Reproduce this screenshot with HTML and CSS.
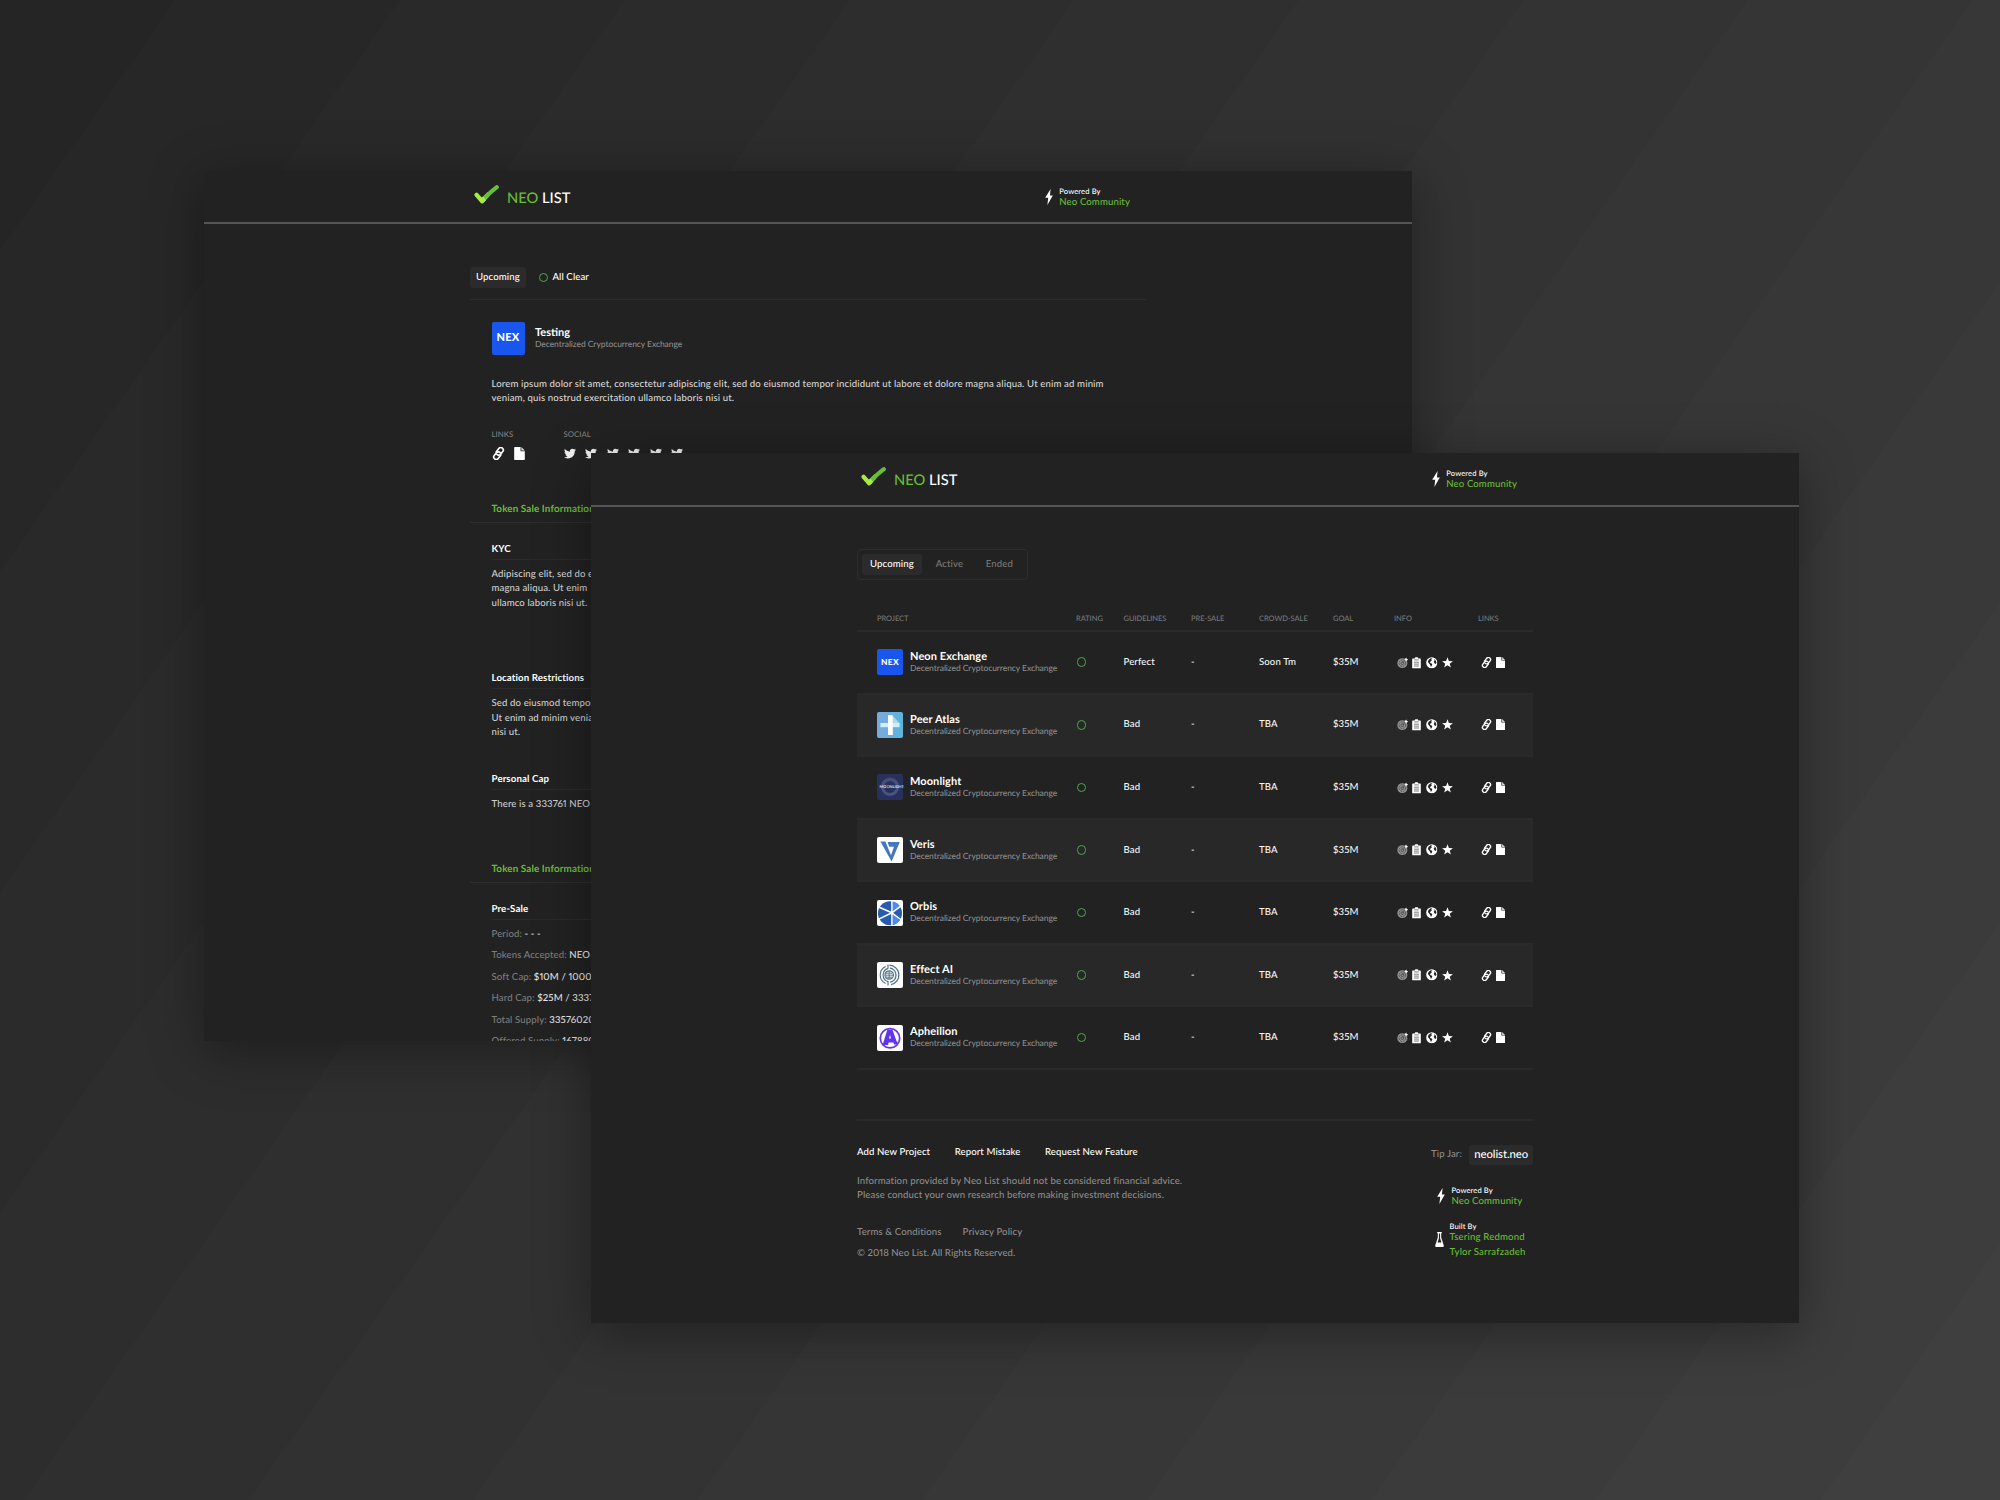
FILE: index.html
```html
<!DOCTYPE html>
<html lang="en">
<head>
<meta charset="utf-8">
<title>Neo List</title>
<link rel="stylesheet" href="styles.css">
</head>
<body>
<svg class="sprite" aria-hidden="true">
  <symbol id="check" viewBox="0 0 25 19">
    <path d="M2.6 9.9 8.2 16.2 14 9.6" fill="none" stroke="#a9ea46" stroke-width="4.3" stroke-linecap="round" stroke-linejoin="round"/>
    <path d="M10.4 12.8C14 9.8 17.4 6.4 22.8 2.2" fill="none" stroke="#68be35" stroke-width="4.2" stroke-linecap="round"/>
    <path d="M7.6 12.6 9.8 11.8 11.8 15.4 8.5 18.2 6 16.4Z" fill="#a9ea46"/>
  </symbol>
  <symbol id="bolt" viewBox="0 0 8 16"><path d="M5.6 0 0.2 8.8H3.2L2.4 16 7.8 6.6H4.9Z" fill="#fff"/></symbol>
  <symbol id="flask" viewBox="0 0 9 15"><path d="M2.2 0H6.8V1.2H6.2V5.6L8.8 13.4Q9 15 7.6 15H1.4Q0 15 .2 13.4L2.8 5.6V1.2H2.2Z" fill="#fff"/><path d="M3.9 1.4H5.1V6.2L6.4 10.4H2.6L3.9 6.2Z" fill="#222"/></symbol>
  <symbol id="link" viewBox="0 0 12 12"><g fill="none" stroke="#fff" stroke-width="1.5" stroke-linecap="round" transform="rotate(-52 6 6)"><path d="M6.2 8.6H2.2A2.3 2.3 0 0 1 2.2 4H5.4A2.3 2.3 0 0 1 7.5 6.8"/><path d="M5.8 3.4H9.8A2.3 2.3 0 0 1 9.8 8H6.6A2.3 2.3 0 0 1 4.5 5.2"/></g></symbol>
  <symbol id="file" viewBox="0 0 9 11"><path d="M.6 0H5.4V3.6H9V10.4Q9 11 8.4 11H.6Q0 11 0 10.4V.6Q0 0 .6 0Z" fill="#fff"/><path d="M6.1 0 9 2.9H6.1Z" fill="#ddd"/></symbol>
  <symbol id="target" viewBox="0 0 12 12"><circle cx="5.6" cy="6.4" r="5.2" fill="#929292"/><g fill="none" stroke="#3a3a3a" stroke-width=".7"><circle cx="5.6" cy="6.4" r="3.4" stroke-dasharray="2 .8"/><circle cx="5.6" cy="6.4" r="1.5"/><path d="M5.6 6.4 9.5 2.5"/></g><path d="M8.4 3.7V1.8L9.8.6 10.1 2 11.6 2.4 10.3 3.8Z" fill="#fff"/></symbol>
  <symbol id="clipboard" viewBox="0 0 9 12"><path d="M.6 1.6H2.6L3.2.2H5.8L6.4 1.6H8.4Q9 1.6 9 2.2V11.4Q9 12 8.4 12H.6Q0 12 0 11.4V2.2Q0 1.6.6 1.6Z" fill="#fff"/><path d="M2.2 3H6.8M1.9 5.4H7.1M1.9 7.4H7.1M1.9 9.4H7.1" stroke="#555" stroke-width=".8"/></symbol>
  <symbol id="globe" viewBox="0 0 12 12"><circle cx="6" cy="6" r="5.8" fill="#fff"/><path d="M4.9 1.2 6.6 1.6 5.4 2.8 6 3.8 4.6 4.8 4.2 6.2 6 6.8 6.6 8.2 5.6 9.6 5.2 10.6 4.4 8.4 3 6.6 2 5.2 2.6 3Z M8.6 2 10.1 3.6 10.9 6 10.2 7.4 8.8 6.4 8 5 8.9 3.8Z" fill="#222"/></symbol>
  <symbol id="star" viewBox="0 0 11 11"><path d="M5.5.3 6.9 4.1 10.9 4.2 7.7 6.7 8.9 10.6 5.5 8.3 2.1 10.6 3.3 6.7.1 4.2 4.1 4.1Z" fill="#fff"/></symbol>
  <symbol id="bird" viewBox="0 40 512 430"><path fill="#f2f2f2" d="M459.37 151.716c.325 4.548.325 9.097.325 13.645 0 138.72-105.583 298.558-298.558 298.558-59.452 0-114.68-17.219-161.137-47.106 8.447.974 16.568 1.299 25.34 1.299 49.055 0 94.213-16.568 130.274-44.832-46.132-.975-84.792-31.188-98.112-72.772 6.498.974 12.995 1.624 19.818 1.624 9.421 0 18.843-1.3 27.614-3.573-48.081-9.747-84.143-51.98-84.143-102.985v-1.299c13.969 7.797 30.214 12.67 47.431 13.319-28.264-18.843-46.781-51.005-46.781-87.391 0-19.492 5.197-37.36 14.294-52.954 51.655 63.675 129.3 105.258 216.365 109.807-1.624-7.797-2.599-15.918-2.599-24.04 0-57.828 46.782-104.934 104.934-104.934 30.213 0 57.502 12.67 76.67 33.137 23.715-4.548 46.456-13.32 66.599-25.34-7.798 24.366-24.366 44.833-46.132 57.827 21.117-2.273 41.584-8.122 60.426-16.243-14.292 20.791-32.161 39.308-52.628 54.253z"/></symbol>
</svg>

<section class="window window-back">
  <header class="topbar"><div class="container topbar-inner">
    <div class="brand"><svg class="brand-mark"><use href="#check"/></svg><span class="brand-name"><b>NEO</b> LIST</span></div>
    <div class="powered"><svg class="bolt"><use href="#bolt"/></svg><div><p class="credit-label">Powered By</p><p class="credit-name">Neo Community</p></div></div>
  </div></header>
  <main class="container detail">
    <div class="status"><span class="chip">Upcoming</span><i class="ring"></i><span class="clear">All Clear</span></div>
    <div class="detail-body">
      <div class="profile"><span class="logo logo-nex logo-large">NEX</span><div><h2 class="profile-name">Testing</h2><p class="tagline">Decentralized Cryptocurrency Exchange</p></div></div>
      <p class="intro">Lorem ipsum dolor sit amet, consectetur adipiscing elit, sed do eiusmod tempor incididunt ut labore et dolore magna aliqua. Ut enim ad minim<br>veniam, quis nostrud exercitation ullamco laboris nisi ut.</p>
      <div class="resources">
        <div class="resource-links"><p class="label">LINKS</p><div class="resource-icons"><svg class="big-link"><use href="#link"/></svg><svg class="big-file"><use href="#file"/></svg></div></div>
        <div><p class="label">SOCIAL</p><div class="social-icons"><svg><use href="#bird"/></svg><svg><use href="#bird"/></svg><svg><use href="#bird"/></svg><svg><use href="#bird"/></svg><svg><use href="#bird"/></svg><svg><use href="#bird"/></svg></div></div>
      </div>
    </div>
    <h3 class="section-title">Token Sale Information</h3>
    <div class="section kyc"><h4>KYC</h4><p>Adipiscing elit, sed do eiusmod<br>magna aliqua. Ut enim<br>ullamco laboris nisi ut.</p></div>
    <div class="section location"><h4>Location Restrictions</h4><p>Sed do eiusmod tempor<br>Ut enim ad minim veniam<br>nisi ut.</p></div>
    <div class="section cap"><h4>Personal Cap</h4><p>There is a 333761 NEO Max</p></div>
    <h3 class="section-title">Token Sale Information</h3>
    <div class="section"><h4>Pre-Sale</h4>
      <dl class="facts">
        <div><dt>Period:</dt> <dd>- - -</dd></div>
        <div><dt>Tokens Accepted:</dt> <dd>NEO</dd></div>
        <div><dt>Soft Cap:</dt> <dd>$10M / 100001</dd></div>
        <div><dt>Hard Cap:</dt> <dd>$25M / 33376</dd></div>
        <div><dt>Total Supply:</dt> <dd>335760208</dd></div>
        <div><dt>Offered Supply:</dt> <dd>16788010</dd></div>
      </dl>
    </div>
  </main>
</section>

<section class="window window-front">
  <header class="topbar"><div class="container topbar-inner">
    <div class="brand"><svg class="brand-mark"><use href="#check"/></svg><span class="brand-name"><b>NEO</b> LIST</span></div>
    <div class="powered"><svg class="bolt"><use href="#bolt"/></svg><div><p class="credit-label">Powered By</p><p class="credit-name">Neo Community</p></div></div>
  </div></header>
  <main class="container listing">
    <nav class="tabs"><a class="tab tab-active">Upcoming</a><a class="tab">Active</a><a class="tab">Ended</a></nav>
    <div class="table">
      <div class="row head"><span>PROJECT</span><span>RATING</span><span>GUIDELINES</span><span>PRE-SALE</span><span>CROWD-SALE</span><span>GOAL</span><span>INFO</span><span>LINKS</span></div>
      <div class="row">
        <div class="project"><span class="logo logo-nex">NEX</span><div><h2>Neon Exchange</h2><p class="tagline">Decentralized Cryptocurrency Exchange</p></div></div>
        <i class="ring"></i><span>Perfect</span><span>-</span><span>Soon Tm</span><span>$35M</span>
        <div class="info-icons"><svg class="i-target"><use href="#target"/></svg><svg class="i-clip"><use href="#clipboard"/></svg><svg class="i-globe"><use href="#globe"/></svg><svg class="i-star"><use href="#star"/></svg></div>
        <div class="link-icons"><svg class="i-link"><use href="#link"/></svg><svg class="i-file"><use href="#file"/></svg></div>
      </div>
      <div class="row">
        <div class="project"><svg class="logo" viewBox="0 0 26 26"><defs><linearGradient id="sky"><stop offset="0" stop-color="#7ba9dc"/><stop offset="1" stop-color="#5cb4dc"/></linearGradient></defs><rect width="26" height="26" rx="2" fill="url(#sky)"/><path d="M16 4 22.5 11H16Z" fill="#a5dcea"/><path d="M3.4 11H22.6V15.2H3.4Z" fill="#cdeff5"/><path d="M11 3.2H15.8V23H11Z" fill="#fff"/></svg><div><h2>Peer Atlas</h2><p class="tagline">Decentralized Cryptocurrency Exchange</p></div></div>
        <i class="ring"></i><span>Bad</span><span>-</span><span>TBA</span><span>$35M</span>
        <div class="info-icons"><svg class="i-target"><use href="#target"/></svg><svg class="i-clip"><use href="#clipboard"/></svg><svg class="i-globe"><use href="#globe"/></svg><svg class="i-star"><use href="#star"/></svg></div>
        <div class="link-icons"><svg class="i-link"><use href="#link"/></svg><svg class="i-file"><use href="#file"/></svg></div>
      </div>
      <div class="row">
        <div class="project"><span class="logo logo-moon"><svg viewBox="0 0 26 26"><circle cx="13" cy="13" r="7.5" fill="none" stroke="#454f7d" stroke-width="3.2"/><circle cx="13" cy="12" r="8.2" fill="none" stroke="#66709a" stroke-width=".6" stroke-dasharray="1 1.4"/></svg><em>MO<b>O</b>NLIGHT</em></span><div><h2>Moonlight</h2><p class="tagline">Decentralized Cryptocurrency Exchange</p></div></div>
        <i class="ring"></i><span>Bad</span><span>-</span><span>TBA</span><span>$35M</span>
        <div class="info-icons"><svg class="i-target"><use href="#target"/></svg><svg class="i-clip"><use href="#clipboard"/></svg><svg class="i-globe"><use href="#globe"/></svg><svg class="i-star"><use href="#star"/></svg></div>
        <div class="link-icons"><svg class="i-link"><use href="#link"/></svg><svg class="i-file"><use href="#file"/></svg></div>
      </div>
      <div class="row">
        <div class="project"><svg class="logo" viewBox="0 0 26 26"><rect width="26" height="26" rx="2" fill="#fff"/><path d="M3.4 4.6H8.4L14 18.2 17 9.8H12.2L10.6 5H22.8L14.6 24.4Z" fill="#4377c0"/></svg><div><h2>Veris</h2><p class="tagline">Decentralized Cryptocurrency Exchange</p></div></div>
        <i class="ring"></i><span>Bad</span><span>-</span><span>TBA</span><span>$35M</span>
        <div class="info-icons"><svg class="i-target"><use href="#target"/></svg><svg class="i-clip"><use href="#clipboard"/></svg><svg class="i-globe"><use href="#globe"/></svg><svg class="i-star"><use href="#star"/></svg></div>
        <div class="link-icons"><svg class="i-link"><use href="#link"/></svg><svg class="i-file"><use href="#file"/></svg></div>
      </div>
      <div class="row">
        <div class="project"><svg class="logo" viewBox="0 0 26 26"><rect width="26" height="26" rx="2" fill="#fff"/><circle cx="13" cy="13.2" r="12" fill="#285aae"/><path d="M15.4 12.4V1.4A12 12 0 0 1 23 6.6Z M16 13.6 22.6 20.4A12 12 0 0 1 15.4 25Z" fill="#4c8bf0"/><path d="M14.9 0V26M14.9 12.8 24.4 5.6M14.9 12.8 25 20.5M14.9 12.8 1.6 7M14.9 12.8.8 19.6" stroke="#fff" stroke-width="1.5"/></svg><div><h2>Orbis</h2><p class="tagline">Decentralized Cryptocurrency Exchange</p></div></div>
        <i class="ring"></i><span>Bad</span><span>-</span><span>TBA</span><span>$35M</span>
        <div class="info-icons"><svg class="i-target"><use href="#target"/></svg><svg class="i-clip"><use href="#clipboard"/></svg><svg class="i-globe"><use href="#globe"/></svg><svg class="i-star"><use href="#star"/></svg></div>
        <div class="link-icons"><svg class="i-link"><use href="#link"/></svg><svg class="i-file"><use href="#file"/></svg></div>
      </div>
      <div class="row">
        <div class="project"><svg class="logo" viewBox="0 0 26 26"><rect width="26" height="26" rx="2" fill="#fff"/><g fill="none" stroke="#4c7388"><path d="M8.6 4.6A9.4 9.4 0 0 0 8.6 21.6" stroke-width="1.1"/><path d="M11 2.4V6.4A6.9 6.9 0 0 0 11 19.6V23.6" stroke-width="1.2"/><path d="M12.4 3.2A9.8 9.8 0 0 1 14 22.6" stroke-width="1.3"/><path d="M13 6A7.2 7.2 0 0 1 13 20.2" stroke-width="1.3"/><circle cx="12.2" cy="13" r="4.2" stroke-width="1.2"/><path d="M8.4 11.2H15M8.2 13.2H17M8.4 15.2H15M12.2 9V17" stroke-width=".9"/></g></svg><div><h2>Effect AI</h2><p class="tagline">Decentralized Cryptocurrency Exchange</p></div></div>
        <i class="ring"></i><span>Bad</span><span>-</span><span>TBA</span><span>$35M</span>
        <div class="info-icons"><svg class="i-target"><use href="#target"/></svg><svg class="i-clip"><use href="#clipboard"/></svg><svg class="i-globe"><use href="#globe"/></svg><svg class="i-star"><use href="#star"/></svg></div>
        <div class="link-icons"><svg class="i-link"><use href="#link"/></svg><svg class="i-file"><use href="#file"/></svg></div>
      </div>
      <div class="row">
        <div class="project"><svg class="logo" viewBox="0 0 26 26"><rect width="26" height="26" rx="2" fill="#fff"/><circle cx="13" cy="13.2" r="9.7" fill="none" stroke="#6135e6" stroke-width="1.7"/><path d="M10.4 4.6H15.4L20 17.6H11.6L11 20H5.6Z M13 9.8 12 13.4H14Z" fill="#6135e6" fill-rule="evenodd"/><path d="M16.2 16.6H20.4L21 19.6H17Z" fill="#6135e6"/></svg><div><h2>Apheilion</h2><p class="tagline">Decentralized Cryptocurrency Exchange</p></div></div>
        <i class="ring"></i><span>Bad</span><span>-</span><span>TBA</span><span>$35M</span>
        <div class="info-icons"><svg class="i-target"><use href="#target"/></svg><svg class="i-clip"><use href="#clipboard"/></svg><svg class="i-globe"><use href="#globe"/></svg><svg class="i-star"><use href="#star"/></svg></div>
        <div class="link-icons"><svg class="i-link"><use href="#link"/></svg><svg class="i-file"><use href="#file"/></svg></div>
      </div>
    </div>
    <footer class="footer">
      <div>
        <div class="actions"><a>Add New Project</a><a>Report Mistake</a><a>Request New Feature</a></div>
        <p class="notice">Information provided by Neo List should not be considered financial advice.<br>Please conduct your own research before making investment decisions.</p>
        <div class="legal"><a>Terms &amp; Conditions</a><a>Privacy Policy</a></div>
        <p class="copyright">© 2018 Neo List. All Rights Reserved.</p>
      </div>
      <div class="footer-side">
        <div class="tip"><span>Tip Jar:</span><span class="tip-address">neolist.neo</span></div>
        <div class="powered powered-footer"><svg class="bolt"><use href="#bolt"/></svg><div><p class="credit-label">Powered By</p><p class="credit-name">Neo Community</p></div></div>
        <div class="built"><svg class="flask"><use href="#flask"/></svg><div><p class="credit-label">Built By</p><p class="credit-name">Tsering Redmond</p><p class="credit-name">Tylor Sarrafzadeh</p></div></div>
      </div>
    </footer>
  </main>
</section>
</body>
</html>
```
FILE: styles.css
```css
* { box-sizing: border-box; margin: 0; padding: 0; }
body {
  position: relative;
  width: 2000px;
  height: 1500px;
  overflow: hidden;
  background: linear-gradient(125deg,
    #252525 144px, #272727 144px 328px, #292929 328px 512px, #2b2b2b 512px 696px,
    #2d2d2d 696px 880px, #2f2f2f 880px 1064px, #313131 1064px 1248px, #333 1248px 1432px,
    #353535 1432px 1616px, #373737 1616px 1800px, #393939 1800px 1984px, #3b3b3b 1984px 2168px,
    #3d3d3d 2168px 2352px, #3f3f3f 2352px);
  color: #f6f6f6;
  font: 500 9.6px/14.4px Lato, "Open Sans", sans-serif;
  font-variant-numeric: proportional-nums;
  letter-spacing: .11px;
  text-rendering: geometricPrecision;
  white-space: nowrap;
}
svg { display: block; flex: none; overflow: visible; }
.sprite { position: absolute; width: 0; height: 0; }

/* Windows */
.window {
  position: absolute;
  width: 1208px;
  height: 870px;
  overflow: hidden;
  background: #222;
  box-shadow: 0 10px 50px rgba(0, 0, 0, .36);
}
.window-back { left: 204px; top: 171px; }
.window-front { left: 591px; top: 453px; }
.container { width: 676px; margin: 0 auto; }

/* Top bar */
.topbar { height: 53px; border-bottom: 2px solid #545454; }
.window-front .topbar { height: 54px; }
.topbar-inner { display: flex; justify-content: space-between; align-items: center; height: 51px; padding: 1.5px 16px 0 4px; }
.brand { display: flex; align-items: center; gap: 8px; }
.brand-mark { width: 25px; height: 19px; margin-bottom: 5px; }
.brand-name { padding-top: 1px; font-size: 14.7px; letter-spacing: 0; color: #fff; }
.brand-name b { font-weight: 500; color: #67bd34; }
.powered { display: flex; align-items: center; gap: 6.5px; }
.bolt { width: 8px; height: 16px; }
.credit-label { font-size: 7.6px; line-height: 12px; color: #fff; }
.credit-name { font-size: 9.6px; line-height: 12px; color: #67bd34; }

/* Shared pieces */
.ring { width: 9.6px; height: 9.6px; margin-left: .6px; border: 1.5px solid #4ea64f; border-radius: 50%; }
.tagline { font-size: 8.5px; line-height: 11.4px; letter-spacing: -.07px; color: #8a8a8a; }
.logo { width: 26px; height: 26px; flex: none; border-radius: 2px; }
.logo-nex { display: grid; place-items: center; background: #1956ee; color: #fff; font-weight: 900; font-size: 8.4px; line-height: 10px; letter-spacing: .3px; }
.logo-large { width: 33px; height: 33px; font-size: 11px; }
.logo-moon { position: relative; display: grid; place-items: center; background: #27315c; }
.logo-moon svg { width: 26px; height: 26px; }
.logo-moon em { position: absolute; left: 2.6px; top: 10px; color: #dfe2ee; font: 700 3.9px/6px Lato, sans-serif; letter-spacing: 0; }
.logo-moon b { color: #e79a3c; }

/* Detail page */
.detail { padding-top: 43px; }
.status { display: flex; align-items: center; height: 33px; padding-bottom: 11px; border-bottom: 1px solid #2d2d2d; color: #fff; }
.chip { height: 21px; padding: 0 6px; border-radius: 3px; background: #2b2b2b; line-height: 22.6px; }
.clear { padding-top: 1.6px; }
.status .ring { margin: 0 4px 0 13px; }
.detail-body { padding: 21.5px 0 0 21.5px; }
.profile { display: flex; gap: 10.5px; align-items: center; }
.profile-name { font-size: 11px; line-height: 13px; letter-spacing: 0; color: #fff; }
.intro { margin-top: 23.2px; color: #d6d6d6; letter-spacing: .13px; }
.resources { display: flex; margin-top: 21.2px; }
.resource-links { width: 72px; }
.label { font-size: 7.8px; line-height: 12px; letter-spacing: 0; color: #7f7f7f; }
.resource-icons, .social-icons { display: flex; align-items: center; height: 13px; margin-top: 7.3px; }
.big-link { width: 13px; height: 13px; }
.big-file { width: 11px; height: 13px; margin-left: 9px; }
.social-icons { gap: 9.6px; }
.social-icons svg { width: 12px; height: 11px; }
.section-title { margin-top: 41.6px; padding: 0 0 6.4px 21.5px; border-bottom: 1px solid #2d2d2d; font-size: 9.9px; line-height: 14px; color: #67bd34; }
.section { margin: 18.6px 0 0 21.5px; color: #cfcfcf; }
.section h4 { padding-bottom: 3px; border-bottom: 1px solid #2b2b2b; font-size: 9.7px; line-height: 14px; color: #fff; }
.section p { margin-top: 8.2px; }
.location { margin-top: 60px; }
.cap { margin-top: 31.3px; }
.cap + .section-title { margin-top: 49.6px; }
.facts { margin-top: 3.8px; line-height: 21.55px; }
.facts dt, .facts dd { display: inline; }
.facts dt { color: #7d7d7d; }
.facts dd { color: #e6e6e6; }

/* Listing page */
.listing { padding-top: 42px; }
.tabs { display: flex; align-items: center; width: 171px; height: 30.5px; padding: 0 4px; border: 1px solid #2d2d2d; border-radius: 4px; color: #777; }
.tab { height: 21px; padding: 0 14px 0 8px; line-height: 22.6px; }
.tab + .tab + .tab { padding-left: 8.6px; }
.tab-active { padding: 0 8px; margin-right: 6px; border-radius: 3px; background: #2b2b2b; color: #fff; }
.table { margin-top: 26.5px; }
.row { display: grid; grid-template-columns: 199px 47.5px 67.5px 68px 74px 61px 84px 1fr; align-items: center; height: 62.57px; padding-left: 20px; border-bottom: 2px solid #2a2a2a; }
.row > span { padding-top: 1.6px; }
.row:nth-child(odd):not(.head) { background: #282828; }
.head { height: 26px; font-size: 7.5px; letter-spacing: -.05px; color: #777; }
.project { display: flex; align-items: center; gap: 7px; }
.project h2 { font-size: 11px; line-height: 13px; letter-spacing: .08px; color: #fff; }
.info-icons, .link-icons { display: flex; align-items: center; padding-left: 2.5px; }
.i-target { width: 11.5px; height: 11.5px; }
.i-clip { width: 9px; height: 11.5px; margin-left: 4.2px; }
.i-globe { width: 11.5px; height: 11.5px; margin-left: 5.2px; }
.i-star { width: 11px; height: 11px; margin-left: 4.4px; }
.i-link { width: 11px; height: 11px; }
.i-file { width: 9px; height: 11px; margin-left: 4.8px; }

/* Footer */
.footer { display: flex; justify-content: space-between; margin-top: 49px; padding-top: 24px; border-top: 2px solid #2a2a2a; color: #8c8c8c; }
.actions { display: flex; gap: 24.5px; padding-top: 1.2px; line-height: 14px; letter-spacing: .1px; color: #fff; }
.notice { margin-top: 14.8px; }
.legal { display: flex; gap: 21px; margin-top: 22px; line-height: 14px; }
.copyright { margin-top: 7.3px; line-height: 14px; letter-spacing: .04px; }
.footer-side { width: 102px; }
.tip { display: flex; justify-content: space-between; align-items: center; height: 20px; padding-top: .6px; }
.tip-address { padding: 0 5px; border-radius: 3px; background: #2b2b2b; color: #fff; font-size: 11.3px; line-height: 20px; letter-spacing: -.08px; }
.powered-footer { margin: 19px 0 0 6px; }
.built { display: flex; gap: 6px; align-items: flex-start; margin: 13.5px 0 0 3.5px; }
.flask { width: 9px; height: 15px; margin-top: 10.5px; }
.built .credit-label { line-height: 10px; }
.built .credit-name { line-height: 14.5px; letter-spacing: .16px; }
```
